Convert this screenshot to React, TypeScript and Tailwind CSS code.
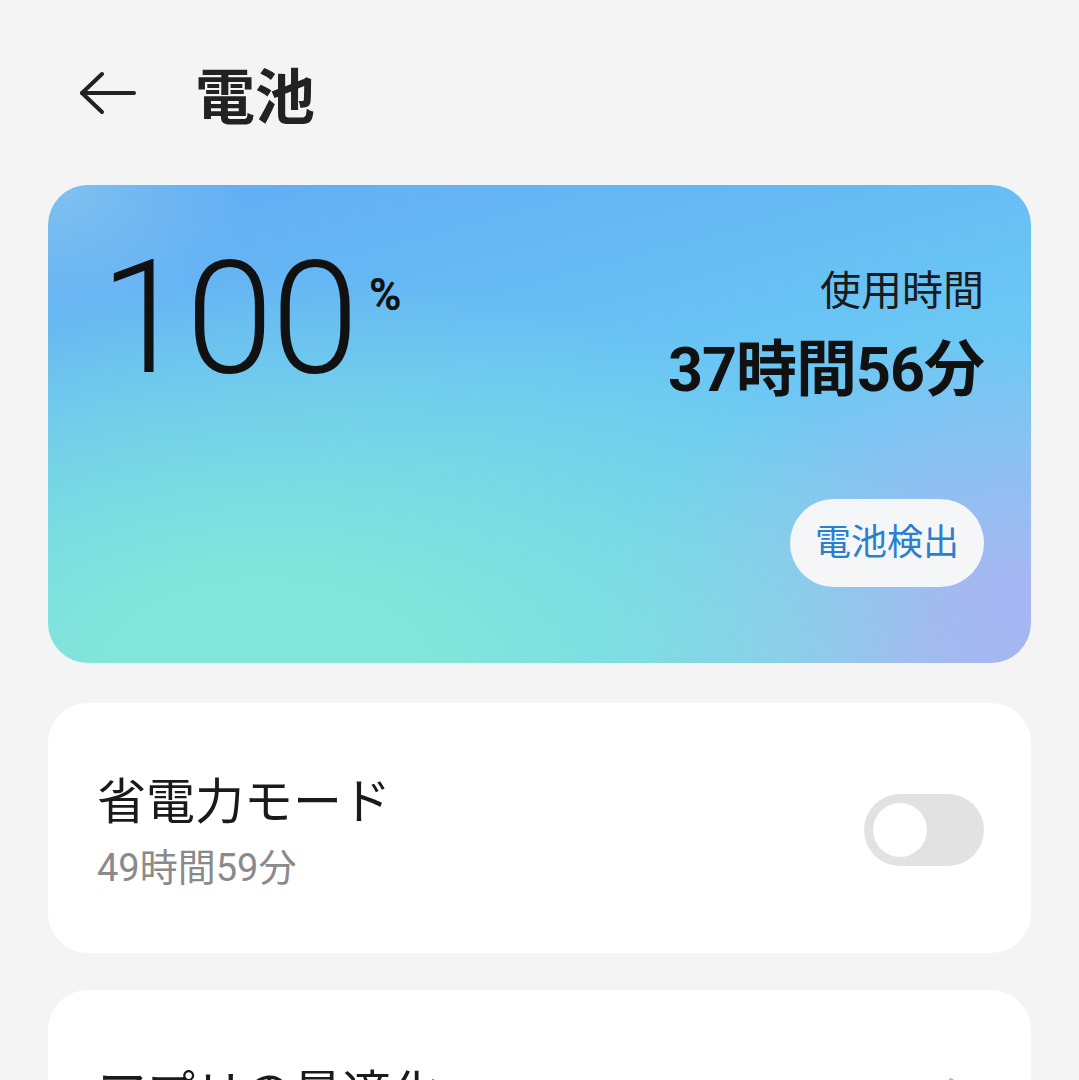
import React from "react";

const jp = "font-['Roboto','Noto_Sans_CJK_JP','Noto_Sans',sans-serif]";

const BackArrow = () => (
  <svg width="60" height="44" viewBox="0 0 60 44" fill="none" stroke="#222" strokeWidth="4" strokeLinecap="round" strokeLinejoin="round">
    <path d="M56 22H4" />
    <path d="M24 3L4 22l20 19" />
  </svg>
);

const Toggle = () => (
  <div className="w-[120px] h-[72px] rounded-full bg-[#e2e2e2] flex items-center px-[9px]">
    <div className="w-[54px] h-[54px] rounded-full bg-white" />
  </div>
);

export default function App() {
  return (
    <div className={`w-[1079px] h-[1080px] overflow-hidden bg-[#f4f4f4] ${jp}`}>
      {/* header */}
      <div className="flex items-center h-[190px] pl-[78px]">
        <div className="flex items-center -mt-[4px]">
          <BackArrow />
        </div>
        <h1 className="ml-[57px] text-[60px] leading-none font-bold text-[#222] mt-[8px]">電池</h1>
      </div>

      <div className="px-[48px] flex flex-col">
        {/* battery card */}
        <div className="h-[478px] -mt-[5px] rounded-[40px] bg-[radial-gradient(ellipse_75%_80%_at_22%_100%,#82e6da_0%,#82e6da_20%,rgba(130,230,218,0)_100%),radial-gradient(ellipse_45%_70%_at_100%_100%,#a6b6f2_0%,#a6b6f2_25%,rgba(166,182,242,0)_100%),radial-gradient(ellipse_20%_30%_at_0%_0%,#80c2f0_0%,rgba(128,194,240,0)_100%),linear-gradient(165deg,#62aaf4_0%,#6ac6f4_50%,#76d6ee_100%)] flex justify-between pl-[52px] pr-[47px]">
          <div className="flex items-start pt-[54px]">
            <span className="font-['Roboto',sans-serif] font-light text-[158px] leading-none tracking-[-2px] text-[#111]">100</span>
            <span className="font-['Roboto',sans-serif] font-bold text-[44px] leading-none text-[#111] mt-[34px] ml-[12px]">%</span>
          </div>
          <div className="flex flex-col items-end pt-[86px]">
            <div className="text-[41px] leading-none text-[#1a1a1a]">使用時間</div>
            <div className="text-[61px] leading-none font-bold text-[#111] mt-[28px] tracking-[-1px]">37時間56分</div>
            <button className="mt-[98px] h-[88px] px-[25px] rounded-full bg-[#f4f6f8] text-[#2a7fd0] text-[36px] leading-none">
              電池検出
            </button>
          </div>
        </div>

        {/* power saving */}
        <div className="mt-[40px] h-[250px] rounded-[40px] bg-white flex items-center justify-between pl-[49px] pr-[47px]">
          <div className="flex flex-col mt-[8px]">
            <div className="text-[49px] leading-none text-[#1a1a1a]">省電力モード</div>
            <div className="text-[38px] leading-none text-[#8a8a8a] mt-[22px]">49時間59分</div>
          </div>
          <div className="mt-[4px]">
            <Toggle />
          </div>
        </div>

        {/* app optimization */}
        <div className="mt-[37px] h-[250px] rounded-[40px] bg-white flex items-start justify-between pl-[49px] pr-[60px] pt-[80px]">
          <div className="text-[49px] leading-none text-[#1a1a1a]">アプリの最適化</div>
          <svg width="24" height="40" viewBox="0 0 24 40" fill="none" stroke="#bbb" strokeWidth="4" strokeLinecap="round" strokeLinejoin="round" className="mt-[6px]">
            <path d="M4 4l16 16L4 36" />
          </svg>
        </div>
      </div>
    </div>
  );
}
